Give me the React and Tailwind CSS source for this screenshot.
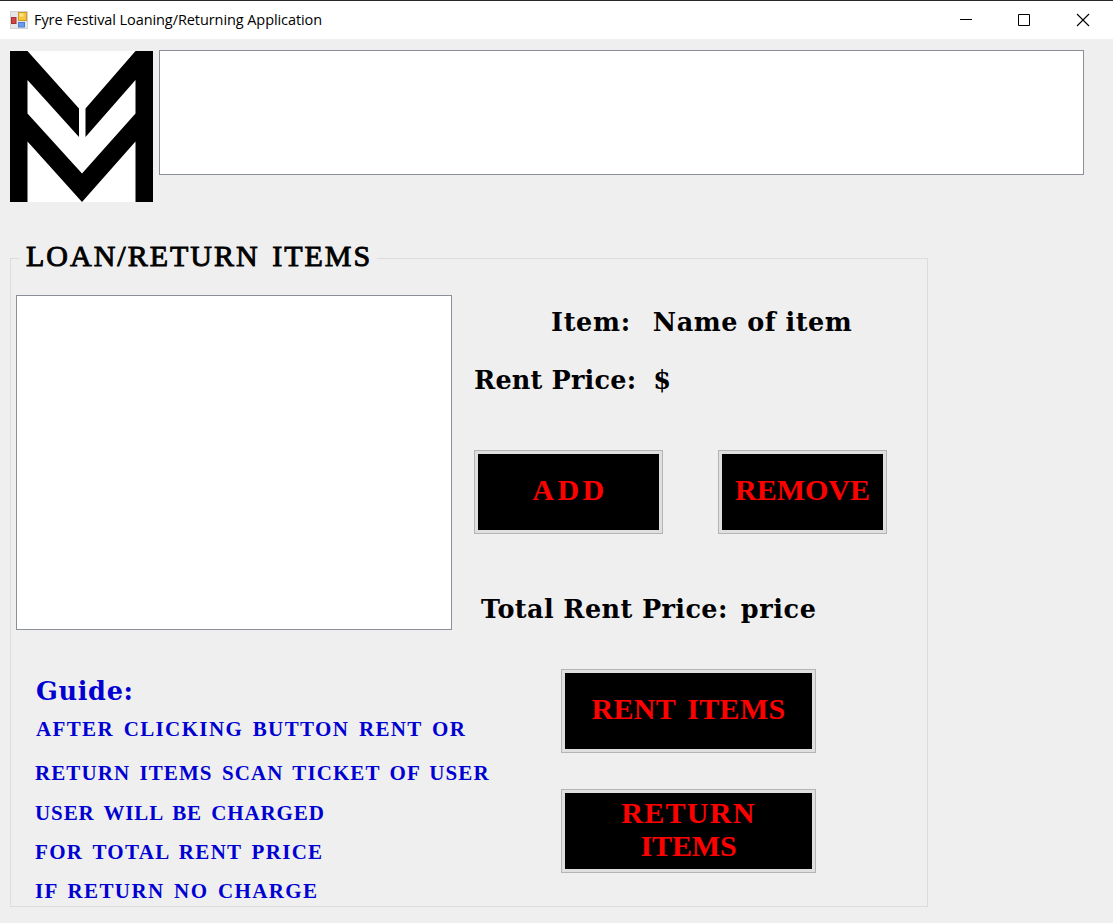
const serif = "font-['Liberation_Serif',serif]";
const slab = "font-['DejaVu_Serif',serif] font-bold text-[25.5px] leading-[30px] whitespace-nowrap";

function FormIcon() {
  return (
    <svg width="18" height="18" viewBox="0 0 18 18" className="shrink-0">
      <rect x="0.5" y="0.5" width="17" height="17" fill="#e4e6ea" stroke="#d3d3d3" />
      <rect x="1.500" y="6.500" width="4.500" height="6" fill="#cf4640" stroke="#a83232" />
      <rect x="8.500" y="1.500" width="8" height="8" fill="#f5c63c" stroke="#cf9a22" />
      <rect x="9.500" y="2.500" width="4" height="3" fill="#fbe28c" />
      <rect x="8.500" y="11.500" width="6" height="4.500" fill="#6b9bea" stroke="#4b7cd4" />
    </svg>
  );
}

function TitleBar() {
  return (
    <header className="flex h-[39px] shrink-0 items-center border-t border-[#26262b] bg-white pl-2.5">
      <FormIcon />
      <h1 className="ml-1.5 grow whitespace-nowrap font-['Open_Sans',sans-serif] text-[14.5px] leading-5 tracking-[-0.08px] text-black">
        Fyre Festival Loaning/Returning Application
      </h1>
      <svg width="153" height="20" viewBox="0 0 153 20" fill="none" stroke="#000" className="shrink-0">
        <path d="M0 9.500h12" />
        <path d="M58.500 4.500h11v11h-11z" />
        <path d="M117 4l12 12M129 4l-12 12" strokeWidth="1.1" />
      </svg>
    </header>
  );
}

function Logo() {
  return (
    <svg width="143" height="151" viewBox="0 0 143 151" className="mt-px shrink-0">
      <path fill="#fff" d="M0 0h143v151H0z" />
      <path d="M0 0h17.500L69 57.500V86L17.500 29v33.500L72 122.500 125.500 62.500V29L75.500 86V57.500L125.500 0H143v151h-17.500V90.500L72 151 17.500 90.500V151H0z" />
    </svg>
  );
}

function ActionButton({ className, children }) {
  return (
    <button className={`flex items-center justify-center border border-[#b4b4b4] bg-[#dfdfdf] p-[3px] ${className}`}>
      <span className={`flex h-full w-full flex-col items-center justify-center bg-black pb-[5px] ${serif} text-[30px] font-bold leading-[33px] whitespace-nowrap text-[#ff0000]`}>
        {children}
      </span>
    </button>
  );
}

export default function App() {
  return (
    <div className="flex h-[923px] w-[1113px] flex-col overflow-hidden bg-[#efefef] text-black">
      <TitleBar />
      <div className="flex h-[201px] shrink-0 items-start gap-1.5 pl-2.5 pt-[11px]">
        <Logo />
        <div className="h-[125px] w-[925px] border border-[#8b8f98] bg-white" />
      </div>

      <fieldset className="ml-2.5 h-[667px] w-[918px] shrink-0 border border-[#dcdcdc]">
        <legend className={`ml-2 h-[37px] w-[358px] pl-[7px] ${serif} whitespace-nowrap text-[30px] leading-[32px] tracking-[2px] [word-spacing:3px] [-webkit-text-stroke:0.9px_#000]`}>
          LOAN/RETURN ITEMS
        </legend>

        <div className="flex">
          <section className="w-[463px] shrink-0 pl-[5px] pt-[18px]">
            <div className="h-[335px] w-[436px] border border-[#8b8f98] bg-white" />
            <div className="pl-5 pt-[46px] text-[#0000d2]">
              <h2 className={`${slab} tracking-[0.7px]`}>Guide:</h2>
              <div className={`mt-[11px] -ml-px flex flex-col ${serif} whitespace-nowrap text-[21px] font-bold leading-6 [word-spacing:3px]`}>
                <p className="pl-px tracking-[1.37px]">AFTER CLICKING BUTTON RENT OR</p>
                <p className="mt-5 tracking-[1.08px]">RETURN ITEMS SCAN TICKET OF USER</p>
                <p className="mt-4 tracking-[0.9px]">USER WILL BE CHARGED</p>
                <p className="mt-[15px] tracking-[1.3px]">FOR TOTAL RENT PRICE</p>
                <p className="mt-[15px] tracking-[1.37px]">IF RETURN NO CHARGE</p>
              </div>
            </div>
          </section>

          <section className="pt-[30px]">
            <div className="flex gap-[22px] pl-[77px]">
              <span className={`${slab} tracking-[0.7px]`}>Item:</span>
              <span className={`${slab} tracking-[0.5px]`}>Name of item</span>
            </div>
            <div className="mt-7 flex gap-[17px]">
              <span className={`${slab} tracking-[0.2px]`}>Rent Price:</span>
              <span className={slab}>$</span>
            </div>
            <div className="mt-[55px] flex gap-[55px]">
              <ActionButton className="h-[84px] w-[189px]">
                <span className="pl-[3px] tracking-[3.5px]">ADD</span>
              </ActionButton>
              <ActionButton className="h-[84px] w-[169px]">REMOVE</ActionButton>
            </div>
            <div className="mt-[60px] flex gap-[13px] pl-[7px]">
              <span className={`${slab} tracking-[0.4px]`}>Total Rent Price:</span>
              <span className={`${slab} tracking-[0.6px]`}>price</span>
            </div>
            <div className="mt-[45px] flex flex-col gap-9 pl-[87px]">
              <ActionButton className="h-[84px] w-[255px]">
                <span className="tracking-[0.3px] [word-spacing:4px]">RENT ITEMS</span>
              </ActionButton>
              <ActionButton className="h-[84px] w-[255px]">
                <span className="tracking-[1.3px]">RETURN</span>
                <span className="tracking-[-0.1px]">ITEMS</span>
              </ActionButton>
            </div>
          </section>
        </div>
      </fieldset>
    </div>
  );
}
